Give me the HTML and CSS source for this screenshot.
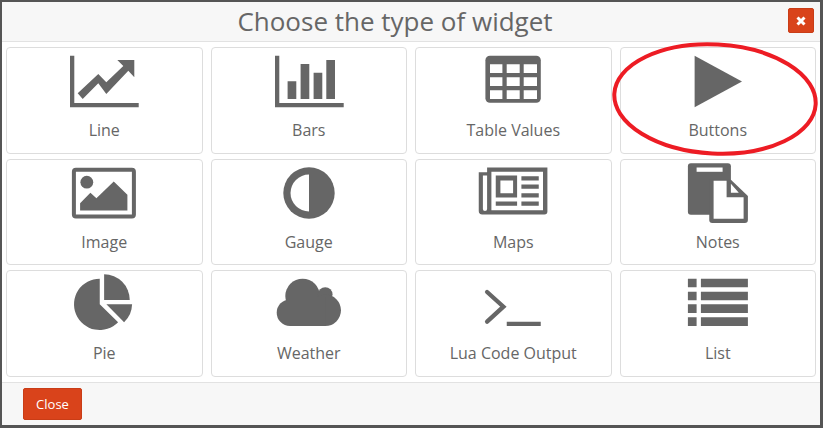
FILE: index.html
```html
<!DOCTYPE html>
<html lang="en">
<head>
  <meta charset="UTF-8" />
  <title>Choose the type of widget</title>
  <link rel="stylesheet" href="styles.css">
</head>
<body>
  <div class="modal">
    <header class="modal-header">
      <h1>Choose the type of widget</h1>
      <button class="btn-x" aria-label="Close">
        <svg width="10" height="10" viewBox="0 0 10 10"><path d="M1.5 1.5l7 7M8.5 1.5l-7 7"/></svg>
      </button>
    </header>

    <main class="widgets">
      <div class="widget">
        <svg class="icon" viewBox="0 -3 80 60">
          <path d="M6 1.7h4.3v47.3h64.4v4.3H6z"/>
          <path d="M70.3 6H53.3l6 6-17 16.300-8-8.300-20.600 19.300 5 5.700 15.600-15.700 8 10.700 22-23.300 6 6.600z"/>
        </svg>
        <span>Line</span>
      </div>
      <div class="widget">
        <svg class="icon" viewBox="0 -3 80 60">
          <path d="M6 1.700h4.300v47.300h64.400v4.300H6z"/>
          <path d="M18.600 27.300h8.700V45h-8.700zM31.600 10h8.700v35h-8.700zM44.600 18.700h8.700V45h-8.700zM57.300 6H66v39h-8.700z"/>
        </svg>
        <span>Bars</span>
      </div>
      <div class="widget">
        <svg class="icon" viewBox="0 -3 80 60">
          <rect x="12.400" y="1.700" width="55.400" height="47" rx="4.500"/>
          <path class="cut" d="M17 10.300h12.400V19H17zM33.700 10.300h13V19h-13zM50.700 10.300H64V19H50.700zM17 23.300h12.400V32H17zM33.700 23.300h13V32h-13zM50.700 23.300H64V32H50.700zM17 36.300h12.400V45H17zM33.700 36.300h13V45h-13zM50.700 36.300H64V45H50.700z"/>
        </svg>
        <span>Table Values</span>
      </div>
      <div class="widget">
        <svg class="icon" viewBox="0 -3 80 60">
          <path d="M16.600 1.700L64 27.600 16.600 53.300z"/>
        </svg>
        <span>Buttons</span>
      </div>

      <div class="widget">
        <svg class="icon" viewBox="0 -3 80 60">
          <rect x="9.900" y="3.700" width="60" height="46.800" rx="2" class="frame"/>
          <circle cx="22.800" cy="16.200" r="6.400"/>
          <path d="M16.100 44.500v-7.300l10.300-10.400 6 5.400 17.350-16.700 13.650 13.300v15.700z"/>
        </svg>
        <span>Image</span>
      </div>
      <div class="widget">
        <svg class="icon" viewBox="0 -3 80 60">
          <circle cx="40" cy="27" r="25.700"/>
          <path class="cut" d="M40 8.500a18.500 18.500 0 0 0 0 37z"/>
        </svg>
        <span>Gauge</span>
      </div>
      <div class="widget">
        <svg class="icon" viewBox="0 -3 80 60">
          <path fill-rule="evenodd" d="M14.100 1.500h60.300v44a3 3 0 0 1-3 3H9.200a3.500 3.500 0 0 1-3.450-3.500V6.200h8.350zM9.900 9.500v33.500a1.700 1.700 0 0 0 4.200 0V9.500zM18.400 5.800v38.400h51.600V5.800z"/>
          <path fill-rule="evenodd" d="M22.750 9.500h21.350v22H22.750zM27.400 14.500v12.700h12.700V14.500z"/>
          <path d="M48.400 10.200h17.350v4.300H48.400zM48.400 18.500h17.350v4.300H48.400zM48.400 27.200h17.350v4.300H48.400zM48.400 35.500h17.350v4.300H48.400zM22.750 35.500h21.350v4.300H22.750z"/>
        </svg>
        <span>Maps</span>
      </div>
      <div class="widget">
        <svg class="icon" viewBox="0 -3 80 60">
          <rect x="9.900" y="-2.800" width="43" height="51.600" rx="3"/>
          <path class="cut" d="M18.600 1.500h26v4.300h-26z"/>
          <path d="M31.250 13.800H52.900L69.900 30v24a3 3 0 0 1-3 3H34.250a3 3 0 0 1-3-3z"/>
          <path class="cut" d="M35.600 14.800h13v16.400h17v21.600h-30zM52.900 17.800l7.900 9h-7.900z"/>
        </svg>
        <span>Notes</span>
      </div>

      <div class="widget">
        <svg class="icon" viewBox="0 -3 80 60">
          <path d="M35.750 1.650a25.700 25.700 0 1 0 18.350 43.650L35.750 27.300z"/>
          <path d="M40.100-2.670A25.670 25.670 0 0 1 65.750 23H40.100z"/>
          <path d="M42.400 27.300h25.700a25.700 25.700 0 0 1-8 18z"/>
        </svg>
        <span>Pie</span>
      </div>
      <div class="widget">
        <svg class="icon" viewBox="0 -3 80 60">
          <circle cx="33.600" cy="19" r="17.300"/>
          <circle cx="56.250" cy="17.500" r="7.300"/>
          <circle cx="21" cy="35.700" r="13.300"/>
          <circle cx="56.250" cy="33.300" r="15.700"/>
          <path d="M21 20h35.250v29H21z"/>
        </svg>
        <span>Weather</span>
      </div>
      <div class="widget">
        <svg class="icon" viewBox="0 -3 80 60">
          <path class="prompt" d="M14.100 15l16.300 14.700-16.300 15"/>
          <path d="M33.750 44.700h34V49h-34z"/>
        </svg>
        <span>Lua Code Output</span>
      </div>
      <div class="widget">
        <svg class="icon" viewBox="0 -3 80 60">
          <path d="M9.900 1.670h8.700v8.630H9.900zM22.900 1.670h47v8.630h-47zM9.900 14.670h8.700v8.630H9.900zM22.900 14.670h47v8.630h-47zM9.900 27.300h8.700V36H9.900zM22.900 27.300h47V36h-47zM9.900 40.300h8.700V49H9.900zM22.900 40.300h47V49h-47z"/>
        </svg>
        <span>List</span>
      </div>
    </main>

    <footer class="modal-footer">
      <button class="btn-close">Close</button>
    </footer>

    <svg class="highlight" width="216" height="124" viewBox="0 0 216 124">
      <ellipse cx="108" cy="62" rx="100.800" ry="54.500" transform="rotate(3 108 62)"/>
    </svg>
  </div>
</body>
</html>
```

FILE: styles.css
```css
* {
  box-sizing: border-box;
}

html, body {
  height: 100%;
}

body {
  margin: 0;
  font-family: "Open Sans", sans-serif;
  color: #666;
  overflow: hidden;
}

.modal {
  position: relative;
  display: flex;
  flex-direction: column;
  height: 100vh;
  background: #fff;
  border: solid #555;
  border-width: 2px 3px 3px 2px;
}

.modal-header {
  display: flex;
  align-items: flex-start;
  height: 40px;
  background: #f7f7f7;
  border-bottom: 1px solid #e2e2e2;
}

.modal-header h1 {
  flex: 1;
  margin: 0;
  font-size: 26px;
  font-weight: 400;
  line-height: 39px;
  text-align: center;
  color: #666;
}

.btn-x {
  display: flex;
  align-items: center;
  justify-content: center;
  width: 26px;
  height: 25px;
  margin: 6px 6px 0 0;
  padding: 0;
  background: #d9431b;
  border: 1px solid #c93d17;
  border-radius: 2px;
}

.btn-x svg path {
  fill: none;
  stroke: #fff;
  stroke-width: 3;
}

/* grille des widgets */
.widgets {
  flex: 1;
  display: grid;
  grid-template-columns: repeat(4, 1fr);
  grid-template-rows: repeat(3, 1fr);
  column-gap: 8px;
  row-gap: 5px;
  padding: 5px 4px 5.5px;
}

.widget {
  display: flex;
  flex-direction: column;
  align-items: center;
  padding-top: 3px;
  border: 1px solid #ddd;
  border-radius: 4px;
  background: #fff;
}

.widget span {
  margin-top: 8px;
  font-size: 16px;
  line-height: 22px;
}

.icon {
  width: 80px;
  height: 60px;
  fill: #666;
  overflow: visible;
}

.icon .cut {
  fill: #fff;
}

.icon .frame {
  fill: none;
  stroke: #666;
  stroke-width: 4;
}

.icon .prompt {
  fill: none;
  stroke: #666;
  stroke-width: 4.3;
  stroke-linecap: round;
}

.modal-footer {
  height: 43px;
  padding: 5px 21px;
  background: #f7f7f7;
  border-top: 1px solid #e2e2e2;
}

.btn-close {
  width: 59px;
  height: 32px;
  padding: 0;
  font-family: "Open Sans", sans-serif;
  font-size: 13px;
  color: #fff;
  background: #d9431b;
  border: 1px solid #c93d17;
  border-radius: 2px;
}

/* annotation rouge par-dessus la carte Buttons */
.highlight {
  position: absolute;
  left: 604.5px;
  top: 35.3px;
  pointer-events: none;
}

.highlight ellipse {
  fill: none;
  stroke: #ed1c24;
  stroke-width: 4;
}
```
